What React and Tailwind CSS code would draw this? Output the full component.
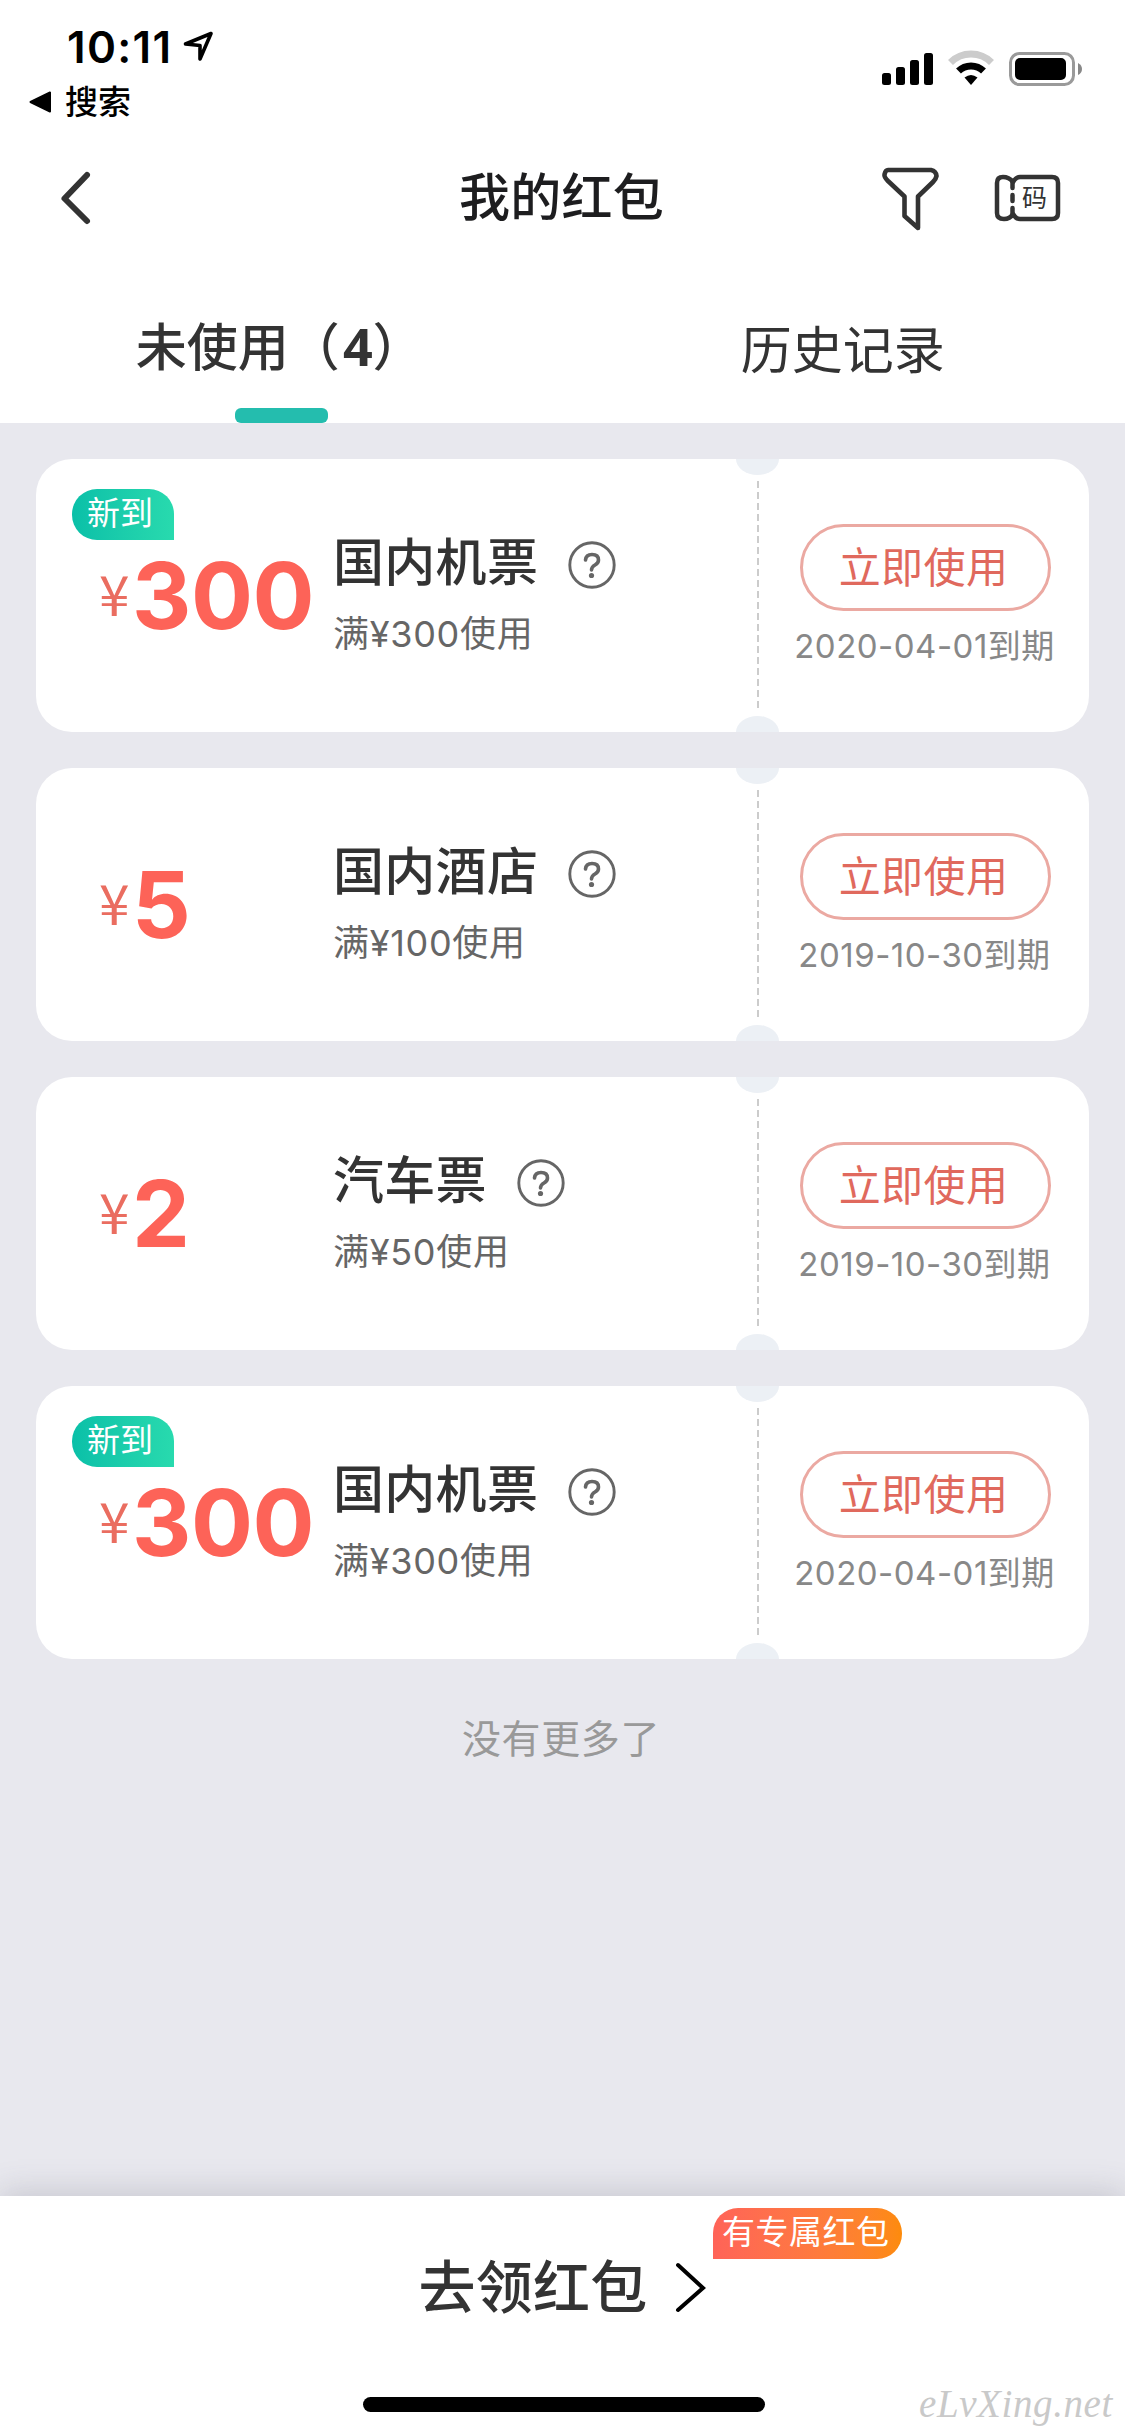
const coupons = [
  { isNew: true, amount: '300', title: '国内机票', rule: '满¥300使用', date: '2020-04-01到期' },
  { isNew: false, amount: '5', title: '国内酒店', rule: '满¥100使用', date: '2019-10-30到期' },
  { isNew: false, amount: '2', title: '汽车票', rule: '满¥50使用', date: '2019-10-30到期' },
  { isNew: true, amount: '300', title: '国内机票', rule: '满¥300使用', date: '2020-04-01到期' },
];

function StatusBar() {
  return (
    <div className="flex h-[132px] justify-between text-black">
      <div className="flex flex-col pt-[22px]">
        <div className="flex h-[50px] items-center pl-[67px]">
          <span className="w-[116px] whitespace-nowrap text-[44px] font-semibold leading-[50px] tracking-[1.3px]">10:11</span>
          <svg className="h-[32px] w-[32px]" viewBox="0 0 32 32" fill="none">
            <path d="M2.500 13 28 2.500 17 28V14.500Z" stroke="#000" strokeWidth="3.600" strokeLinejoin="round" />
          </svg>
        </div>
        <div className="flex h-[63px] items-center gap-[14px] pl-[29px]">
          <svg className="h-[22px] w-[22px]" viewBox="0 0 22 22">
            <path d="M1.500 11 21 1.500v19Z" stroke="#000" strokeWidth="2" strokeLinejoin="round" />
          </svg>
          <span className="text-[33px] font-medium leading-[40px]">搜索</span>
        </div>
      </div>
      <svg className="mr-[41px] mt-[48px] h-[44px] w-[204px]" viewBox="880 48 204 44">
        <rect x="882" y="73" width="9" height="12" rx="2.5" />
        <rect x="896" y="67" width="9" height="18" rx="2.5" />
        <rect x="910" y="60" width="9" height="25" rx="2.5" />
        <rect x="924" y="53" width="9" height="32" rx="2.5" />
        <path d="M950.500 62.500A29 29 0 0 1 991.500 62.500" fill="none" stroke="#ccc" strokeWidth="7" />
        <path d="M958.500 71A18 18 0 0 1 983.500 71" fill="none" stroke="#000" strokeWidth="7" />
        <path d="M964.500 77.500Q971 72.500 977.500 77.500L971 85Z" />
        <rect x="1010.500" y="53.500" width="63" height="31" rx="9" fill="none" stroke="#9a9a9a" strokeWidth="3" />
        <rect x="1015" y="58" width="51" height="22" rx="5" />
        <path d="M1078 63Q1082 65 1082 69T1078 75Z" fill="#888" />
      </svg>
    </div>
  );
}

function NavBar() {
  return (
    <div className="grid h-[132px] grid-cols-[1fr_auto_1fr] items-center">
      <svg className="ml-[58px] h-[56px] w-[36px]" viewBox="0 0 36 56" fill="none">
        <path d="M29 5 6.500 28.500 29 51" stroke="#333" strokeWidth="6" strokeLinecap="round" strokeLinejoin="round" />
      </svg>
      <h1 className="-ml-[2px] text-[51px] font-medium leading-[64px] tracking-[0.3px] text-[#1d1d1f]">我的红包</h1>
      <div className="flex items-center justify-end gap-[53px] pr-[63px]">
        <svg className="h-[66px] w-[60px]" viewBox="880 166 60 66" fill="none" stroke="#333" strokeWidth="4.600" strokeLinejoin="round">
          <path d="M888 171H931Q936 172 936.500 177Q936 180 933 183L918 197.500V229L904.500 217V197.500L888 182Q884 178 884.500 175.500Q885.500 171 888 171Z" />
        </svg>
        <div className="relative h-[50px] w-[69px]">
          <svg className="h-[50px] w-[69px]" viewBox="993 173 69 50" fill="none" stroke="#333" strokeWidth="4.500">
            <path d="M1013 182Q1016 177 1020 177H1052Q1058 177 1058 183V213Q1058 219 1052 219H1020Q1016 219 1013 214Q1010 219 1004 219Q997 219 997 213V183Q997 177 1003 177Q1009 177 1013 182Z" strokeLinejoin="round" />
            <path d="M1012.500 182V188M1012.500 195V201M1012.500 208V214" strokeLinecap="round" />
          </svg>
          <span className="absolute left-[29px] top-[13px] text-[25px] leading-[24px] text-[#333]">码</span>
        </div>
      </div>
    </div>
  );
}

function Tabs() {
  return (
    <div className="grid h-[159px] grid-cols-2 text-[51px] leading-[60px] text-[#333]">
      <div className="flex flex-col items-center justify-between pt-[54px]">
        <span className="-ml-[3px] whitespace-nowrap font-medium">未使用（<b className="pl-[3px] font-['Open_Sans'] text-[52px] font-bold leading-[50px]">4</b>）</span>
        <i className="ml-px h-[15px] w-[93px] rounded-[6px] bg-[#24bdae]" />
      </div>
      <div className="flex justify-center pt-[57px]">
        <span className="-ml-[2px]">历史记录</span>
      </div>
    </div>
  );
}

function HelpIcon() {
  return (
    <svg className="mt-[4px] h-[48px] w-[48px]" viewBox="0 0 48 48" fill="none" stroke="#666" strokeLinecap="round">
      <circle cx="24" cy="24" r="22.200" strokeWidth="2.900" />
      <path d="M17.500 19Q18 13.500 24 13.500Q30.500 13.500 30.500 19Q30.500 22 27 24Q23.500 26 23.500 29" strokeWidth="3.600" />
      <circle cx="23.500" cy="34.500" r="2.600" fill="#666" stroke="none" />
    </svg>
  );
}

function Coupon({ item }) {
  return (
    <article className="relative flex h-[273px] overflow-hidden rounded-[36px] bg-white">
      {item.isNew && (
        <span className="absolute left-9 top-[30px] h-[51px] w-[102px] rounded-l-[25px] rounded-tr-[25px] bg-gradient-to-r from-[#09c0a8] to-[#28daae] pl-[15px] text-[33px] leading-[48px] text-white">新到</span>
      )}
      <div className="flex w-[297px] pl-[63px] pt-[82px] text-[#fd6358]">
        <span className="w-[33px] font-['Noto_Sans_CJK_SC'] text-[55px] leading-[103px] text-[#ea6d60]">¥</span>
        <b className="text-[92px] leading-[110px] tracking-[-0.5px]">{item.amount}</b>
      </div>
      <div className="w-[409px] pt-[71px]">
        <div className="flex items-center gap-[30px]">
          <h2 className="text-[51px] font-medium leading-[66px] tracking-[0.3px] text-[#333]">{item.title}</h2>
          <HelpIcon />
        </div>
        <p className="mt-[16px] text-[36px] leading-[44px] tracking-[0.7px] text-[#666]">{item.rule}</p>
      </div>
      <div className="absolute left-[721px] top-[22px] h-[229px] w-[2px] bg-[repeating-linear-gradient(to_bottom,#ccc_0,#ccc_7px,transparent_7px,transparent_11px)]" />
      <div className="absolute -top-[16px] left-[700px] h-[32px] w-[43px] rounded-[50%] bg-[#ecf0f5]" />
      <div className="absolute -bottom-[16px] left-[700px] h-[32px] w-[43px] rounded-[50%] bg-[#ecf0f5]" />
      <div className="flex grow flex-col items-center pl-[19px] pt-[65px]">
        <button className="h-[87px] w-[251px] rounded-full border-[3px] border-[#eba9a2] pr-[3px] text-[42px] leading-[78px] tracking-[0.4px] text-[#e0695d]">立即使用</button>
        <p className="-ml-px mt-[15px] whitespace-nowrap text-[33px] leading-[40px] tracking-[0.5px] text-[#888]">{item.date}</p>
      </div>
    </article>
  );
}

function Footer() {
  return (
    <footer className="relative flex h-[240px] flex-col items-center bg-white shadow-[0_-4px_30px_rgba(80,80,100,0.22)]">
      <div className="flex h-[184px] items-center gap-[27px] text-[#333]">
        <span className="text-[57px] font-medium leading-[70px] tracking-[0.3px]">去领红包</span>
        <svg className="h-[52px] w-[32px]" viewBox="0 0 32 52" fill="none">
          <path d="M3 3 28 26 3 48" stroke="#000" strokeWidth="4" strokeLinecap="round" />
        </svg>
      </div>
      <span className="absolute left-[713px] top-[12px] h-[51px] w-[189px] whitespace-nowrap rounded-r-[25px] rounded-tl-[25px] bg-gradient-to-r from-[#ff6358] to-[#fd8b0b] pl-[9px] text-[33px] leading-[48px] tracking-[0.5px] text-white">有专属红包</span>
      <i className="ml-[2px] mt-[17px] h-[15px] w-[402px] rounded-full bg-black" />
      <span className="absolute bottom-[12px] right-[9px] w-[197px] whitespace-nowrap font-['Liberation_Serif',serif] text-[39px] italic leading-[40px] tracking-[0.6px] text-[#c9c9c9]">eLvXing.net</span>
    </footer>
  );
}

export default function App() {
  return (
    <div className="flex h-[2436px] w-[1125px] flex-col overflow-hidden bg-[#e8e8ee] font-['Inter','Noto_Sans_CJK_SC',sans-serif]">
      <header className="bg-white">
        <StatusBar />
        <NavBar />
        <Tabs />
      </header>
      <main className="flex grow flex-col gap-9 px-9 pt-9">
        {coupons.map((item, i) => (
          <Coupon key={i} item={item} />
        ))}
        <p className="-ml-[3px] mt-[16px] text-center text-[39px] leading-[56px] tracking-[0.6px] text-[#999]">没有更多了</p>
      </main>
      <Footer />
    </div>
  );
}
